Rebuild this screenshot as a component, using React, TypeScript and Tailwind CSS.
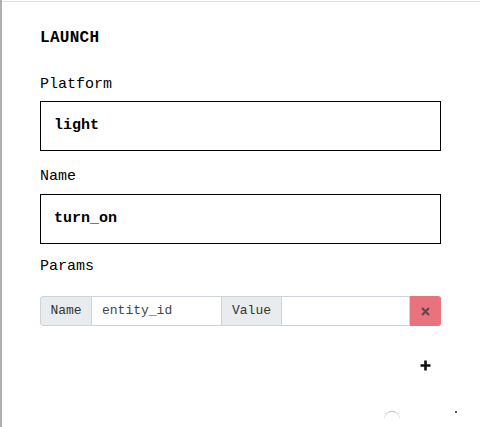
import React from "react";

const mono = { fontFamily: '"Liberation Mono", "DejaVu Sans Mono", monospace' };

export default function App() {
  return (
    <div className="w-[480px] h-[427px] bg-white overflow-hidden relative" style={mono}>
      <div className="h-full border-l-[2px] border-[#b0b0b0] pt-[1px]">
        <div className="h-full border-t border-[#e2e2e2] pl-[38px] pr-[39px] pt-[26px] text-black">
          <div className="text-[16px] leading-[20px] font-bold tracking-[0.3px]">LAUNCH</div>

          <div className="mt-[27px] text-[15px] leading-[20px]">Platform</div>
          <div className="mt-[6px] h-[50px] border border-black flex items-center pl-[13px] text-[15px] font-bold">
            light
          </div>

          <div className="mt-[16px] text-[15px] leading-[20px]">Name</div>
          <div className="mt-[7px] h-[50px] border border-black flex items-center pl-[13px] text-[15px] font-bold">
            turn_on
          </div>

          <div className="mt-[13px] text-[15px] leading-[20px]">Params</div>

          <div className="mt-[19px] h-[30px] flex text-[13px] text-[#333]">
            <div className="w-[52px] bg-[#e9ecef] border border-[#ced4da] rounded-l-[3px] flex items-center justify-center">
              Name
            </div>
            <div className="w-[130px] border-y border-r border-[#ced4da] flex items-center pl-[10px] text-[#444]">
              entity_id
            </div>
            <div className="w-[59px] bg-[#e9ecef] border-y border-[#ced4da] flex items-center justify-center">
              Value
            </div>
            <div className="w-[129px] border border-[#ced4da]"></div>
            <div className="w-[31px] bg-[#e8737e] rounded-r-[3px] flex items-center justify-center">
              <svg width="9" height="9" viewBox="0 0 10 10">
                <path d="M2 2 L8 8 M8 2 L2 8" stroke="#5a4a4c" strokeWidth="2.4" strokeLinecap="square" />
              </svg>
            </div>
          </div>

          <div className="mt-[34px] flex justify-end pr-[10px]">
            <svg width="11" height="11" viewBox="0 0 11 11">
              <path d="M5.5 0.5 V10.5 M0.5 5.5 H10.5" stroke="#111" strokeWidth="2.6" />
            </svg>
          </div>
        </div>
      </div>
      <div className="absolute left-[384px] top-[411px] w-[16px] h-[8px] border-t border-[#bbb] rounded-t-full"></div>
      <div className="absolute left-[455px] top-[411px] w-[2px] h-[2px] bg-[#555]"></div>
    </div>
  );
}
